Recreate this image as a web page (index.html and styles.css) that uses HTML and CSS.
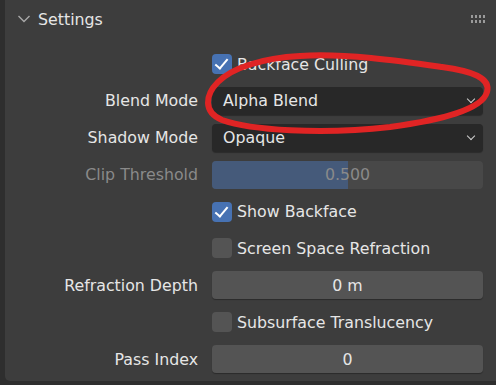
FILE: index.html
```html
<!DOCTYPE html>
<html lang="en">
<head>
    <meta charset="UTF-8">
    <meta name="viewport" content="width=device-width, initial-scale=1.0">
    <title>Settings</title>
    <link rel="stylesheet" href="styles.css">
</head>
<body>
    <div class="panel">
        <div class="panel-header">
            <svg class="chevron" width="14" height="10" viewBox="0 0 14 10">
                <path d="M1.5 2 L7 7.5 L12.5 2" fill="none" stroke="#a8a8a8" stroke-width="1.4"/>
            </svg>
            <span class="panel-title">Settings</span>
            <svg class="grip" width="14" height="9" viewBox="0 0 14 9">
                <g fill="#9a9a9a">
                    <rect x="0" y="0" width="2" height="3"/><rect x="4" y="0" width="2" height="3"/>
                    <rect x="8" y="0" width="2" height="3"/><rect x="12" y="0" width="2" height="3"/>
                    <rect x="0" y="5" width="2" height="3"/><rect x="4" y="5" width="2" height="3"/>
                    <rect x="8" y="5" width="2" height="3"/><rect x="12" y="5" width="2" height="3"/>
                </g>
            </svg>
        </div>

        <div class="form-grid">
            <span></span>
            <label class="check"><span class="box checked"></span>Backface Culling</label>

            <span class="label">Blend Mode</span>
            <div class="dropdown">Alpha Blend</div>

            <span class="label">Shadow Mode</span>
            <div class="dropdown">Opaque</div>

            <span class="label disabled">Clip Threshold</span>
            <div class="slider"><div class="slider-fill" style="width: 50%"></div><span>0.500</span></div>

            <span></span>
            <label class="check"><span class="box checked"></span>Show Backface</label>

            <span></span>
            <label class="check"><span class="box"></span>Screen Space Refraction</label>

            <span class="label">Refraction Depth</span>
            <div class="number">0 m</div>

            <span></span>
            <label class="check"><span class="box"></span>Subsurface Translucency</label>

            <span class="label">Pass Index</span>
            <div class="number">0</div>
        </div>
    </div>

    <svg class="scribble" width="496" height="385" viewBox="0 0 496 385">
        <path d="M300 56 C262 58, 232 68, 218 82 C205 95, 203 112, 222 120 C250 130, 320 135, 390 127 C440 120, 482 110, 487 92 C491 78, 472 71, 442 67 C400 61, 345 53, 300 56 Z"
              fill="none" stroke="#e02424" stroke-width="6" stroke-linecap="round"/>
    </svg>
</body>
</html>
```

FILE: styles.css
```css
body {
    margin: 0;
    width: 496px;
    height: 385px;
    overflow: hidden;
    position: relative;
    background: #2e2e2e;
    font-family: "DejaVu Sans", sans-serif;
    font-size: 15.8px;
    color: #e6e6e6;
}

.panel {
    margin-left: 5px;
    height: 381px;
    background: #3d3d3d;
    border-bottom-left-radius: 5px;
    box-sizing: border-box;
    padding-right: 13px;
}

.panel-header {
    height: 38px;
    display: flex;
    align-items: center;
    padding-left: 12px;
}

.chevron {
    margin-right: 7px;
}

.panel-title {
    flex: 1;
}

.grip {
    margin-right: -2px;
}

.form-grid {
    margin-top: 12px;
    display: grid;
    grid-template-columns: 193px 1fr;
    column-gap: 14px;
    row-gap: 8.875px;
    grid-auto-rows: 28px;
}

.label {
    text-align: right;
    align-self: center;
}

.label.disabled {
    color: #8a8a8a;
}

.check {
    display: flex;
    align-items: center;
}

.box {
    width: 20px;
    height: 20px;
    border-radius: 4px;
    background: #545454;
    margin-right: 5px;
    position: relative;
}

.box.checked {
    background: #4772b3;
}

.box.checked::after {
    content: "";
    position: absolute;
    left: 6px;
    top: 2px;
    width: 5px;
    height: 11px;
    border: solid #fff;
    border-width: 0 2px 2px 0;
    transform: rotate(40deg);
}

.dropdown {
    background: #282828;
    border-radius: 4px;
    box-shadow: 0 1px 1px rgba(0, 0, 0, 0.3);
    display: flex;
    align-items: center;
    padding-left: 11px;
    position: relative;
}

.dropdown::after {
    content: "";
    position: absolute;
    right: 9px;
    top: 9px;
    width: 5px;
    height: 5px;
    border: solid #d0d0d0;
    border-width: 0 1.5px 1.5px 0;
    transform: rotate(45deg);
}

.slider {
    background: #484848;
    border-radius: 4px;
    overflow: hidden;
    position: relative;
    display: flex;
    align-items: center;
    justify-content: center;
    color: #8a8a8a;
}

.slider-fill {
    position: absolute;
    left: 0;
    top: 0;
    bottom: 0;
    background: #455a7a;
}

.slider span {
    position: relative;
}

.number {
    background: #545454;
    border-radius: 4px;
    box-shadow: 0 1px 1px rgba(0, 0, 0, 0.3);
    display: flex;
    align-items: center;
    justify-content: center;
}

.scribble {
    position: absolute;
    left: 0;
    top: 0;
    pointer-events: none;
}
```
